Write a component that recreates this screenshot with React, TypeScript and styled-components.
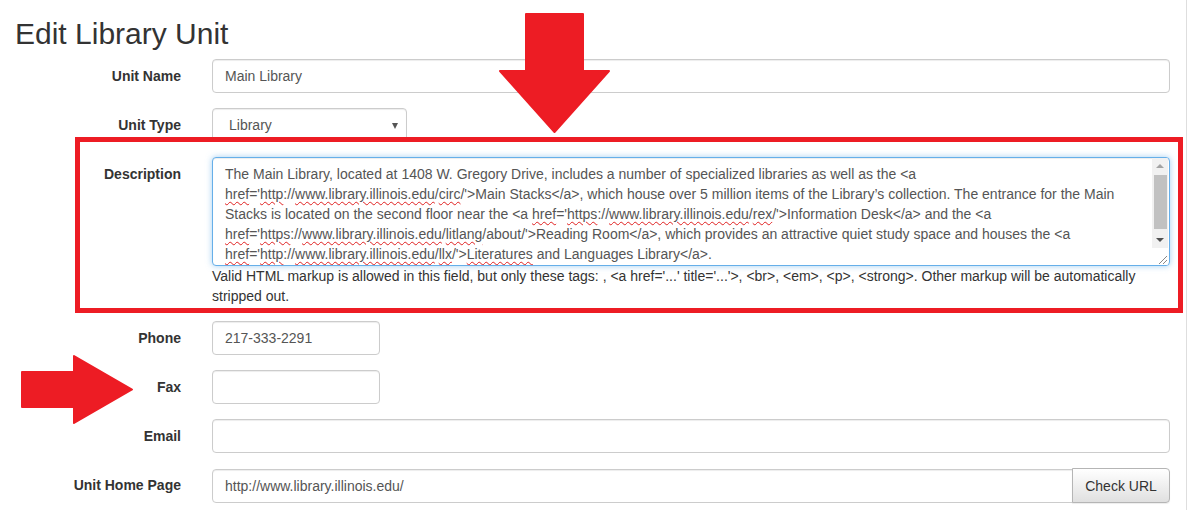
import React from "react";
import styled, { createGlobalStyle } from "styled-components";

const GlobalStyle = createGlobalStyle`
  html, body { margin: 0; padding: 0; background: #fff; }
  body {
    font-family: "Liberation Sans", Arial, Helvetica, sans-serif;
    font-size: 14px;
    line-height: 20px;
    color: #333;
  }
  * { box-sizing: border-box; }
`;

const Page = styled.div`
  position: relative;
  width: 1187px;
  height: 510px;
  overflow: hidden;
  border-right: 1px solid #dedede;
`;

const Title = styled.h2`
  margin: 17px 0 9px 15px;
  font-size: 30px;
  line-height: 33px;
  font-weight: 500;
  color: #333;
`;

const Form = styled.div`
  display: grid;
  grid-template-columns: 181px 958px;
  column-gap: 31px;
  row-gap: 15px;
`;

const Label = styled.div`
  font-weight: bold;
  text-align: right;
  padding-top: 7px;
  line-height: 20px;
  color: #333;
`;

const Field = styled.div<{ $width?: number }>`
  width: ${(p) => (p.$width ? `${p.$width}px` : "100%")};
`;

const Input = styled.input<{ $square?: boolean }>`
  display: block;
  width: 100%;
  height: 34px;
  padding: 6px 12px;
  font: inherit;
  font-size: 14px;
  color: #555;
  background: #fff;
  border: 1px solid #ccc;
  border-radius: ${(p) => (p.$square ? "4px 0 0 4px" : "4px")};
  box-shadow: inset 0 1px 1px rgba(0, 0, 0, 0.075);
  outline: none;
`;

const Select = styled.div`
  display: flex;
  align-items: center;
  justify-content: space-between;
  width: 195px;
  height: 34px;
  padding: 0 8px 0 16px;
  color: #555;
  background: #fff;
  border: 1px solid #ccc;
  border-radius: 4px;
  box-shadow: inset 0 1px 1px rgba(0, 0, 0, 0.075);
`;

const Caret = styled.span`
  width: 0;
  height: 0;
  border-left: 3.5px solid transparent;
  border-right: 3.5px solid transparent;
  border-top: 6px solid #555;
  margin-top: 1px;
`;

const TextBox = styled.div`
  display: flex;
  height: 109px;
  border: 1px solid #66afe9;
  border-radius: 4px;
  box-shadow: inset 0 1px 1px rgba(0, 0, 0, 0.075), 0 0 6px rgba(102, 175, 233, 0.6);
  background: #fff;
  overflow: hidden;
`;

const TextContent = styled.div`
  flex: 1;
  padding: 6px 12px;
  color: #555;
  white-space: nowrap;
  overflow: hidden;
`;

const Line = styled.div`
  height: 20px;
  line-height: 20px;
`;

const Spell = styled.span`
  text-decoration: underline wavy #e02020;
  text-decoration-thickness: 1px;
  text-underline-offset: 2px;
`;

const ScrollColumn = styled.div`
  width: 16px;
  display: flex;
  flex-direction: column;
  margin-right: 1px;
`;

const ScrollTrack = styled.div`
  flex: 1;
  display: flex;
  flex-direction: column;
  align-items: center;
  background: #f1f1f1;
`;

const ArrowBtn = styled.div<{ $down?: boolean }>`
  height: 16px;
  width: 100%;
  display: flex;
  align-items: center;
  justify-content: center;
  &::after {
    content: "";
    width: 0;
    height: 0;
    border-left: 4px solid transparent;
    border-right: 4px solid transparent;
    ${(p) =>
      p.$down
        ? "border-top: 4px solid #505050;"
        : "border-bottom: 4px solid #a3a3a3;"}
  }
`;

const Thumb = styled.div`
  width: 13px;
  height: 54px;
  margin-top: 1px;
  background: #c1c1c1;
`;

const TrackSpacer = styled.div`
  flex: 1;
`;

const Resizer = styled.div`
  height: 17px;
  background: #fff;
  display: flex;
  align-items: flex-end;
  justify-content: flex-end;
`;

const Help = styled.div`
  color: #333;
  line-height: 20px;
`;

const InputGroup = styled.div`
  display: flex;
  align-items: center;
`;

const Button = styled.div`
  flex: none;
  width: 98px;
  height: 35px;
  display: flex;
  align-items: center;
  justify-content: center;
  margin-left: -1px;
  color: #333;
  font-size: 14px;
  border: 1px solid #b5b5b5;
  border-radius: 0 4px 4px 0;
  background: linear-gradient(to bottom, #fff 0%, #e0e0e0 100%);
  box-shadow: 0 1px 1px rgba(0, 0, 0, 0.075);
`;

const Highlight = styled.div`
  position: absolute;
  left: 75px;
  top: 137px;
  width: 1108px;
  height: 176px;
  border: 5px solid #ed1c24;
  pointer-events: none;
`;

const ArrowSvg = styled.svg<{ $left: number; $top: number }>`
  position: absolute;
  left: ${(p) => p.$left}px;
  top: ${(p) => p.$top}px;
  pointer-events: none;
`;

const URL = "www.library.illinois.edu";

export default function App() {
  return (
    <Page>
      <GlobalStyle />
      <Title>Edit Library Unit</Title>
      <Form>
        <Label>Unit Name</Label>
        <Field>
          <Input defaultValue="Main Library" readOnly />
        </Field>

        <Label>Unit Type</Label>
        <Field>
          <Select>
            <span>Library</span>
            <Caret />
          </Select>
        </Field>

        <Label>Description</Label>
        <Field>
          <TextBox>
            <TextContent>
              <Line>
                The Main Library, located at 1408 W. Gregory Drive, includes a number of specialized libraries as well as the &lt;a
              </Line>
              <Line>
                <Spell>href</Spell>='<Spell>http</Spell>://<Spell>{URL}</Spell>/<Spell>circ</Spell>/'&gt;Main Stacks&lt;/a&gt;, which house over 5 million items of the Library’s collection. The entrance for the Main
              </Line>
              <Line>
                Stacks is located on the second floor near the &lt;a <Spell>href</Spell>='<Spell>https</Spell>://<Spell>{URL}</Spell>/<Spell>rex</Spell>/'&gt;Information Desk&lt;/a&gt; and the &lt;a
              </Line>
              <Line>
                <Spell>href</Spell>='<Spell>https</Spell>://<Spell>{URL}</Spell>/<Spell>litlang</Spell>/about/'&gt;Reading Room&lt;/a&gt;, which provides an attractive quiet study space and houses the &lt;a
              </Line>
              <Line>
                <Spell>href</Spell>='<Spell>http</Spell>://<Spell>{URL}</Spell>/<Spell>llx</Spell>/'&gt;<Spell>Literatures</Spell> and Languages Library&lt;/a&gt;.
              </Line>
            </TextContent>
            <ScrollColumn>
              <ScrollTrack>
                <ArrowBtn />
                <Thumb />
                <TrackSpacer />
                <ArrowBtn $down />
              </ScrollTrack>
              <Resizer>
                <svg width="12" height="12" viewBox="0 0 12 12">
                  <path d="M3 11 L11 3 M7 11 L11 7" stroke="#888" strokeWidth="1" fill="none" />
                </svg>
              </Resizer>
            </ScrollColumn>
          </TextBox>
          <Help>
            Valid HTML markup is allowed in this field, but only these tags: , &lt;a href='...' title='...'&gt;, &lt;br&gt;, &lt;em&gt;, &lt;p&gt;, &lt;strong&gt;. Other markup will be automatically stripped out.
          </Help>
        </Field>

        <Label>Phone</Label>
        <Field $width={168}>
          <Input defaultValue="217-333-2291" readOnly />
        </Field>

        <Label>Fax</Label>
        <Field $width={168}>
          <Input defaultValue="" readOnly />
        </Field>

        <Label>Email</Label>
        <Field>
          <Input defaultValue="" readOnly />
        </Field>

        <Label>Unit Home Page</Label>
        <Field>
          <InputGroup>
            <Input $square defaultValue="http://www.library.illinois.edu/" readOnly />
            <Button>Check URL</Button>
          </InputGroup>
        </Field>
      </Form>

      <Highlight />

      <ArrowSvg $left={498} $top={12} width="114" height="122" viewBox="0 0 114 122">
        <path
          d="M28 2 H85 V59 H111 L56.5 120 L2 59 H28 Z"
          fill="#ed1c24"
          stroke="#ed1c24"
          strokeWidth="2"
          strokeLinejoin="round"
        />
      </ArrowSvg>

      <ArrowSvg $left={20} $top={354} width="114" height="71" viewBox="0 0 114 71">
        <path
          d="M2 18 H54 V2 L112 35.5 L54 69 V53 H2 Z"
          fill="#ed1c24"
          stroke="#ed1c24"
          strokeWidth="2"
          strokeLinejoin="round"
        />
      </ArrowSvg>
    </Page>
  );
}
